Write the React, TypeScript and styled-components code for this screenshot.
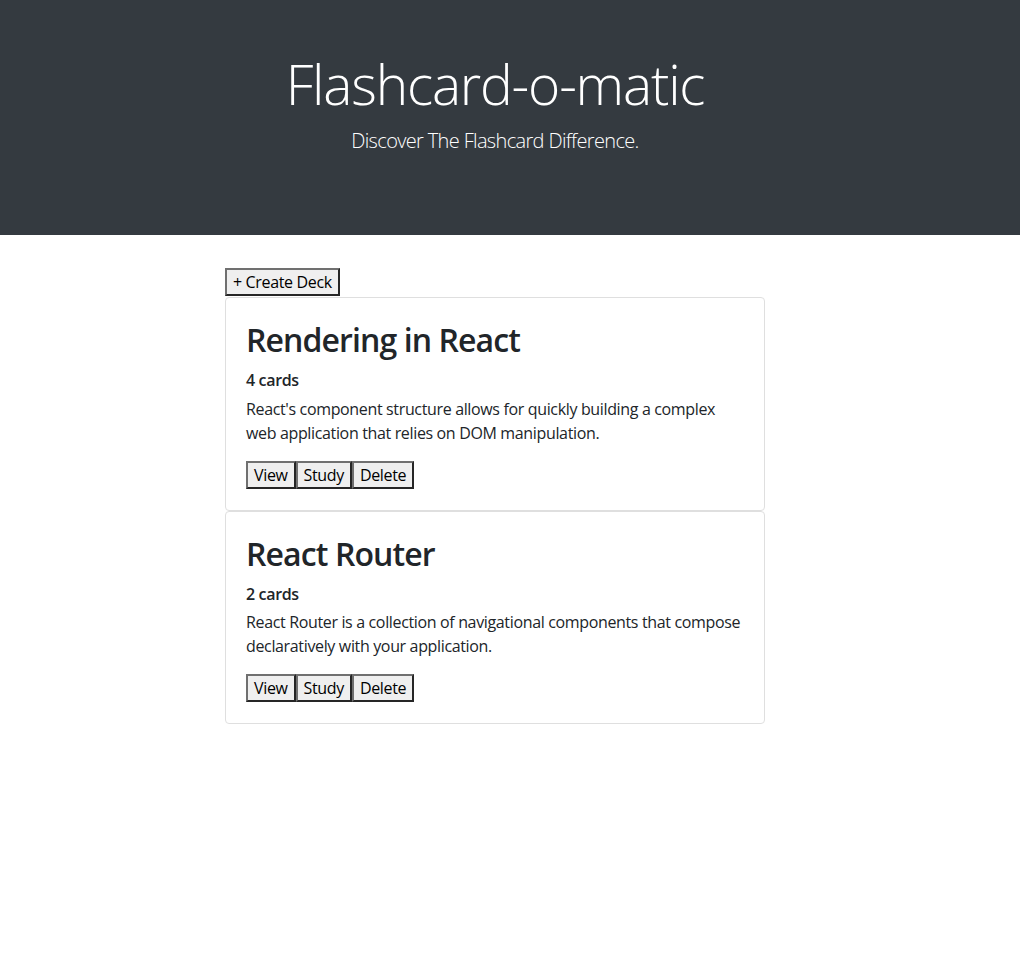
import React from "react";
import styled, { createGlobalStyle } from "styled-components";

const GlobalStyle = createGlobalStyle`
  html, body { margin: 0; padding: 0; background: #fff; }
  body {
    font-family: "Open Sans", "Noto Sans", sans-serif;
    font-size: 16px;
    line-height: 1.5;
    letter-spacing: -0.35px;
    color: #212529;
  }
  * { box-sizing: border-box; }
`;

const Header = styled.header`
  background: #343a40;
  color: #fff;
  height: 235px;
  padding-top: 51px;
  margin-bottom: 33px;
`;

const Column = styled.div`
  width: 540px;
  margin-left: 225px;
`;

const HeaderInner = styled(Column)`
  text-align: center;
`;

const Title = styled.h1`
  margin: 0 0 9px;
  font-size: 55px;
  font-weight: 300;
  line-height: 1.2;
  letter-spacing: -1.2px;
`;

const Lead = styled.p`
  margin: 0;
  font-size: 20px;
  font-weight: 300;
  line-height: 1.5;
  letter-spacing: -0.65px;
`;

const Button = styled.button`
  font-family: inherit;
  font-size: 16px;
  line-height: 22px;
  letter-spacing: inherit;
  height: 28px;
  color: #000;
  background: #efefef;
  padding: 0 6px;
  margin: 0;
  border-width: 2px;
  border-style: solid;
  border-color: #707070 #262626 #262626 #707070;
  border-radius: 0;
  cursor: pointer;
`;

const CreateButton = styled(Button)`
  display: block;
  margin-bottom: 1px;
`;

const Card = styled.article`
  border: 1px solid #dfdfdf;
  border-radius: 4px;
  padding: 23px 20px 21px;
`;

const CardTitle = styled.h2`
  margin: 0 0 12px;
  font-size: 32px;
  font-weight: 600;
  line-height: 1.2;
  letter-spacing: -0.9px;
`;

const CardCount = styled.h6`
  margin: 0 0 6px;
  font-size: 16px;
  font-weight: 600;
  line-height: 1.2;
`;

const CardText = styled.p`
  margin: 0 0 16px;
  font-size: 16px;
  line-height: 24px;
`;

const Actions = styled.div`
  display: flex;
`;

const decks = [
  {
    name: "Rendering in React",
    count: 4,
    description:
      "React's component structure allows for quickly building a complex web application that relies on DOM manipulation.",
  },
  {
    name: "React Router",
    count: 2,
    description:
      "React Router is a collection of navigational components that compose declaratively with your application.",
  },
];

export default function App() {
  return (
    <>
      <GlobalStyle />
      <Header>
        <HeaderInner>
          <Title>Flashcard-o-matic</Title>
          <Lead>Discover The Flashcard Difference.</Lead>
        </HeaderInner>
      </Header>
      <Column>
        <CreateButton>+ Create Deck</CreateButton>
        {decks.map((d) => (
          <Card key={d.name}>
            <CardTitle>{d.name}</CardTitle>
            <CardCount>{d.count} cards</CardCount>
            <CardText>{d.description}</CardText>
            <Actions>
              <Button>View</Button>
              <Button>Study</Button>
              <Button>Delete</Button>
            </Actions>
          </Card>
        ))}
      </Column>
    </>
  );
}
